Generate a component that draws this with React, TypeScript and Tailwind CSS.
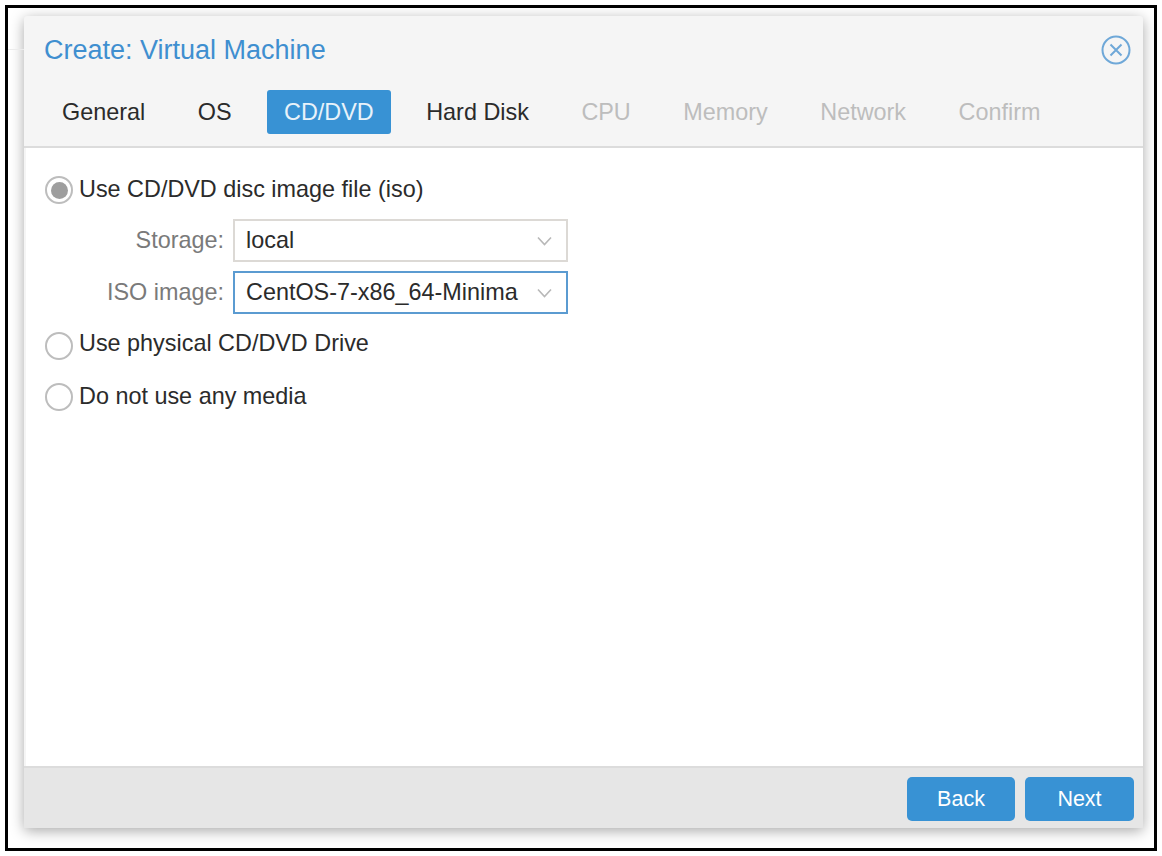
const font = { fontFamily: '"Liberation Sans", Arial, sans-serif' }

const tabs = [
  { label: 'General', state: 'normal' },
  { label: 'OS', state: 'normal' },
  { label: 'CD/DVD', state: 'active' },
  { label: 'Hard Disk', state: 'normal' },
  { label: 'CPU', state: 'disabled' },
  { label: 'Memory', state: 'disabled' },
  { label: 'Network', state: 'disabled' },
  { label: 'Confirm', state: 'disabled' },
]

function Radio({ checked, label, low }: { checked?: boolean; label: string; low?: boolean }) {
  return (
    <div className="flex h-[32px] items-center">
      <span
        className={`flex size-[28px] shrink-0 items-center justify-center rounded-full border-2 border-[#bdbdbd] bg-white ${
          low ? 'translate-y-[2px]' : ''
        }`}
      >
        {checked && <span className="size-[17px] rounded-full bg-[#9e9e9e]" />}
      </span>
      <span className="ml-[6px] text-[23.4px] text-[#2b2b2b]">{label}</span>
    </div>
  )
}

function Field({ label, value, focused }: { label: string; value: string; focused?: boolean }) {
  return (
    <div className="flex items-center">
      <span className="w-[188px] pr-[9px] text-right text-[23.4px] text-[#7a7a7a]">{label}</span>
      <div
        className={`flex h-[43px] w-[335px] items-center justify-between border-2 bg-white pl-[11px] pr-[14px] ${
          focused ? 'border-[#5b9bd1]' : 'border-[#dcd9d5]'
        }`}
      >
        <span className="text-[23.4px] text-[#2b2b2b]">{value}</span>
        <svg width="15" height="10" viewBox="0 0 15 10" fill="none" stroke="#b8b8b8" strokeWidth="1.6">
          <path d="M1 1.5 7.5 8.5 14 1.5" />
        </svg>
      </div>
    </div>
  )
}

export default function App() {
  return (
    <div className="h-[856px] w-[1162px] overflow-hidden bg-white pl-[5px] pt-[5px]" style={font}>
      <div className="relative h-[846px] w-[1152px] border-[3px] border-black bg-white pl-[16px] pt-[8px]">
        <div className="absolute left-0 top-[41px] h-px w-[16px] bg-[#ececec]" />
        <div className="flex h-[812px] w-[1119px] flex-col rounded-[3px] bg-[#f5f5f5] shadow-[0_3px_14px_rgba(0,0,0,0.34)]">
          <div className="h-[132px] shrink-0 border-b-2 border-[#dcdcdc]">
            <div className="flex h-[74px] items-start justify-between pl-[20px] pr-[12px] pt-[19px]">
              <span className="text-[27px] leading-[30px] text-[#3f8fd0]">Create: Virtual Machine</span>
              <svg width="30" height="30" viewBox="0 0 30 30" fill="none" stroke="#6fa8d8" strokeWidth="2">
                <circle cx="15" cy="15" r="13.5" />
                <path d="M9.5 9.5 20.5 20.5M20.5 9.5 9.5 20.5" />
              </svg>
            </div>
            <div className="flex gap-[18.5px] pl-[21px]">
              {tabs.map((tab) => (
                <span
                  key={tab.label}
                  className={`flex h-[44px] items-center justify-center rounded-[3px] px-[17px] pt-[2px] text-[23.4px] ${
                    tab.state === 'active'
                      ? 'bg-[#3892d4] text-[#e8f2fa]'
                      : tab.state === 'disabled'
                        ? 'text-[#bdbdbd]'
                        : 'text-[#2b2b2b]'
                  }`}
                >
                  {tab.label}
                </span>
              ))}
            </div>
          </div>

          <div className="ml-[2px] flex-1 bg-white pl-[19px] pt-[26px]">
            <Radio checked label="Use CD/DVD disc image file (iso)" />
            <div className="mt-[13px] flex flex-col gap-[9px]">
              <Field label="Storage:" value="local" />
              <Field label="ISO image:" value="CentOS-7-x86_64-Minima" focused />
            </div>
            <div className="mt-[14px]">
              <Radio low label="Use physical CD/DVD Drive" />
            </div>
            <div className="mt-[21px]">
              <Radio label="Do not use any media" />
            </div>
          </div>

          <div className="flex h-[62px] shrink-0 items-start justify-end gap-[10px] border-t-2 border-[#dcdcdc] bg-[#e6e6e6] pr-[9px] pt-[9px]">
            <button className="h-[44px] w-[108px] rounded-[5px] bg-[#3892d4] text-[21.5px] text-white">Back</button>
            <button className="h-[44px] w-[109px] rounded-[5px] bg-[#3892d4] text-[21.5px] text-white">Next</button>
          </div>
        </div>
      </div>
    </div>
  )
}
